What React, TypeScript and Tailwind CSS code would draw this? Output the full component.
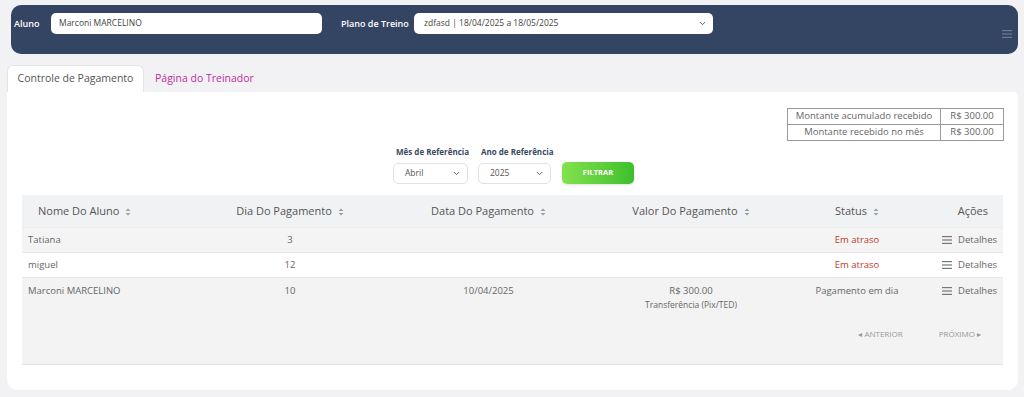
import { ChevronDown } from 'lucide-react';

const font = { fontFamily: '"Open Sans", "Noto Sans", sans-serif' };

type Row = {
  nome: string;
  dia: string;
  data?: string;
  valor?: string;
  forma?: string;
  status: string;
  atraso: boolean;
  bg: string;
};

const rows: Row[] = [
  { nome: 'Tatiana', dia: '3', status: 'Em atraso', atraso: true, bg: 'bg-[#f4f4f5]' },
  { nome: 'miguel', dia: '12', status: 'Em atraso', atraso: true, bg: 'bg-white' },
  {
    nome: 'Marconi MARCELINO',
    dia: '10',
    data: '10/04/2025',
    valor: 'R$ 300.00',
    forma: 'Transferência (Pix/TED)',
    status: 'Pagamento em dia',
    atraso: false,
    bg: 'bg-[#f3f3f4]',
  },
];

const cols = 'grid grid-cols-[168px_200px_197px_208px_124px_84px]';

function SortIcon() {
  return (
    <svg width="6" height="8" viewBox="0 0 6 8" className="ml-[6px] inline-block">
      <path d="M3 0.5 L5.5 3 H0.5 Z" fill="#9aa0a8" />
      <path d="M3 7.5 L5.5 5 H0.5 Z" fill="#9aa0a8" />
    </svg>
  );
}

function MenuIcon({ className }: { className?: string }) {
  return (
    <svg width="10" height="8" viewBox="0 0 10 8" className={className}>
      <rect x="0" y="0" width="10" height="1.2" fill="currentColor" />
      <rect x="0" y="3.4" width="10" height="1.2" fill="currentColor" />
      <rect x="0" y="6.8" width="10" height="1.2" fill="currentColor" />
    </svg>
  );
}

export default function App() {
  return (
    <div className="w-[1024px] h-[397px] bg-[#f2f2f4] pt-[5px] text-[#555]" style={font}>
      {/* barra superior */}
      <div className="mx-[11px] mr-[6px] h-[49px] rounded-[10px] bg-[#344463] flex items-start pt-[8px] pl-[3px] pr-[6px]">
        <span className="text-white text-[9px] font-semibold mt-[4px] w-[37px] whitespace-nowrap">Aluno</span>
        <div className="w-[271px] h-[21px] bg-white rounded-[5px] text-[8.5px] text-[#444] flex items-center pl-[8px]">
          Marconi MARCELINO
        </div>
        <span className="text-white text-[9px] font-semibold mt-[4px] ml-[19px] w-[73px] whitespace-nowrap">Plano de Treino</span>
        <div className="w-[299px] h-[21px] bg-white rounded-[5px] text-[8.5px] text-[#444] flex items-center pl-[10px] pr-[6px] justify-between">
          <span>zdfasd | 18/04/2025 a 18/05/2025</span>
          <ChevronDown size={9} strokeWidth={2.5} className="text-[#555]" />
        </div>
        <div className="flex-1" />
        <MenuIcon className="text-[#6b7a93] mt-[17px]" />
      </div>

      {/* abas */}
      <div className="mx-[7px] mr-[6px] mt-[11px] flex items-end">
        <div className="h-[27px] w-[137px] bg-white rounded-t-[6px] border border-b-0 border-[#e3e4e7] flex items-center justify-center text-[10.5px] text-[#555]">
          Controle de Pagamento
        </div>
        <div className="h-[27px] flex items-center pl-[11px] text-[10.5px] text-[#bf2aa2]">Página do Treinador</div>
      </div>

      {/* cartão principal */}
      <div className="mx-[7px] mr-[6px] h-[298px] bg-white rounded-b-[10px] rounded-tr-[4px] px-[15px] pt-[16px]">
        <div className="flex justify-end">
          <div className="border border-[#9a9a9a] text-[9.5px] text-[#666] mr-[-1px]">
            <div className="flex h-[16px] border-b border-[#9a9a9a]">
              <div className="w-[153px] border-r border-[#9a9a9a] flex items-center justify-center">Montante acumulado recebido</div>
              <div className="w-[62px] flex items-center justify-center">R$ 300.00</div>
            </div>
            <div className="flex h-[15px]">
              <div className="w-[153px] border-r border-[#9a9a9a] flex items-center justify-center">Montante recebido no mês</div>
              <div className="w-[62px] flex items-center justify-center">R$ 300.00</div>
            </div>
          </div>
        </div>

        {/* filtros */}
        <div className="flex justify-center items-end mt-[5px] pl-[2px]">
          <div className="flex flex-col w-[75px]">
            <span className="text-[8px] font-bold text-[#3a4a63] mb-[5px] pl-[3px] whitespace-nowrap">Mês de Referência</span>
            <div className="w-[75px] h-[21px] border border-[#e2e2e2] rounded-[5px] flex items-center justify-between pl-[11px] pr-[6px] text-[8.5px] text-[#555]">
              <span>Abril</span>
              <ChevronDown size={9} strokeWidth={2.5} />
            </div>
          </div>
          <div className="flex flex-col ml-[10px] w-[73px]">
            <span className="text-[8px] font-bold text-[#3a4a63] mb-[5px] pl-[3px] whitespace-nowrap">Ano de Referência</span>
            <div className="w-[73px] h-[21px] border border-[#e2e2e2] rounded-[5px] flex items-center justify-between pl-[11px] pr-[6px] text-[8.5px] text-[#555]">
              <span>2025</span>
              <ChevronDown size={9} strokeWidth={2.5} />
            </div>
          </div>
          <div className="w-[72px] h-[22px] rounded-[5px] bg-gradient-to-r from-[#82e24e] to-[#3cbf2c] flex items-center justify-center text-white text-[7.5px] font-bold shadow-sm ml-[11px]">
            FILTRAR
          </div>
        </div>

        {/* tabela */}
        <div className="mt-[11px] w-[981px] h-[170px] bg-[#f3f3f4] border-b border-[#e3e3e5]">
          <div className={`${cols} h-[33px] items-center text-[11px] text-[#555] bg-[#f1f2f4] border-b border-[#ececee]`}>
            <div className="pl-[16px]">Nome Do Aluno<SortIcon /></div>
            <div className="text-center">Dia Do Pagamento<SortIcon /></div>
            <div className="text-center">Data Do Pagamento<SortIcon /></div>
            <div className="text-center">Valor Do Pagamento<SortIcon /></div>
            <div className="text-center">Status<SortIcon /></div>
            <div className="text-right pr-[15px]">Ações</div>
          </div>
          {rows.map((r) => (
            <div
              key={r.nome}
              className={`${cols} ${r.bg} ${r.forma ? 'h-[45px] pt-[6px] items-start' : 'h-[25px] items-center border-b border-[#e6e6e8]'} text-[9.5px] text-[#666]`}
            >
              <div className="pl-[6px]">{r.nome}</div>
              <div className="text-center">{r.dia}</div>
              <div className="text-center">{r.data}</div>
              <div className="text-center flex flex-col">
                <span>{r.valor}</span>
                {r.forma && <span className="text-[8.5px] mt-[1px]">{r.forma}</span>}
              </div>
              <div className={`text-center ${r.atraso ? 'text-[#c0392b]' : 'text-[#666]'}`}>{r.status}</div>
              <div className="flex items-center justify-end pr-[6px] gap-[6px] h-[14px]">
                <MenuIcon className="text-[#777]" />
                <span>Detalhes</span>
              </div>
            </div>
          ))}
          <div className="flex justify-end gap-[36px] pr-[22px] mt-[5px] text-[8px] text-[#999]">
            <span>◂ ANTERIOR</span>
            <span>PRÓXIMO ▸</span>
          </div>
        </div>
      </div>
    </div>
  );
}
